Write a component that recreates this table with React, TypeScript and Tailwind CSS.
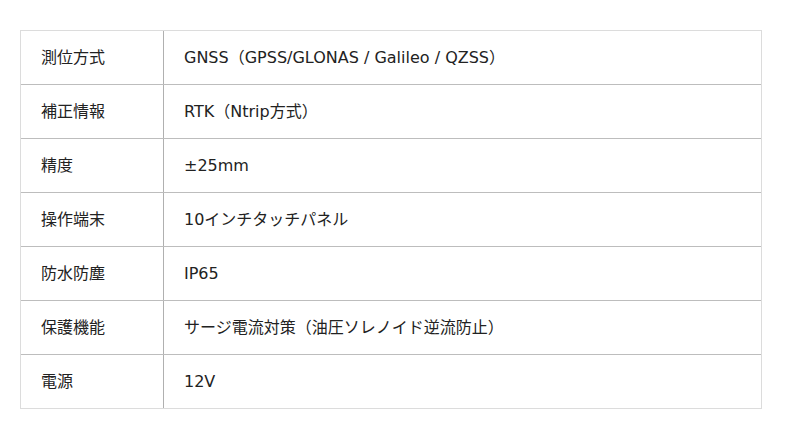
import React from 'react';

const rows: [string, string][] = [
  ['測位方式', 'GNSS（GPSS/GLONAS / Galileo / QZSS）'],
  ['補正情報', 'RTK（Ntrip方式）'],
  ['精度', '±25mm'],
  ['操作端末', '10インチタッチパネル'],
  ['防水防塵', 'IP65'],
  ['保護機能', 'サージ電流対策（油圧ソレノイド逆流防止）'],
  ['電源', '12V'],
];

const App: React.FC = () => {
  return (
    <div className="w-[800px] h-[439px] bg-white pt-[30px] pl-[20px] font-['DejaVu_Sans','Noto_Sans_CJK_JP',sans-serif]">
      <div className="w-[742px] border border-[#dcdcdc] text-[16px] font-normal text-[#222]">
        {rows.map(([label, value], i) => (
          <div
            key={label}
            className={i < rows.length - 1 ? 'flex h-[54px] border-b border-[#bdbdbd]' : 'flex h-[53px]'}
          >
            <div className="w-[143px] shrink-0 flex items-center pl-[20px] border-r border-[#b0b0b0]">
              {label}
            </div>
            <div className="flex items-center pl-[20px]">{value}</div>
          </div>
        ))}
      </div>
    </div>
  );
};

export default App;
